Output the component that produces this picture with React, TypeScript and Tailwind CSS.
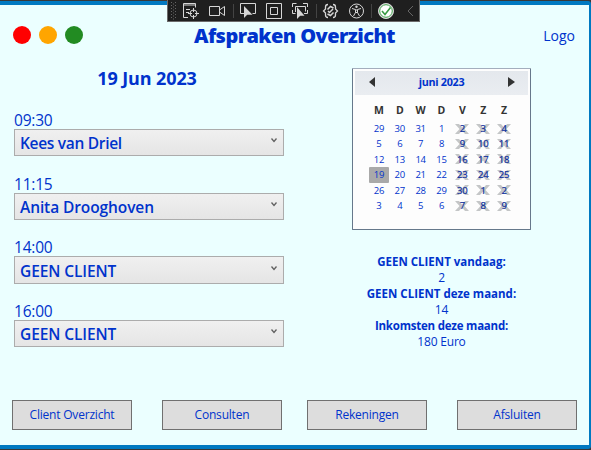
import React from 'react';

const appointments = [
  { time: '09:30', client: 'Kees van Driel', box: 'h-[27px]', gap: 'mb-[21px]', tracking: 'tracking-[-0.3px]' },
  { time: '11:15', client: 'Anita Drooghoven', box: 'h-[27px]', gap: 'mb-5', tracking: 'tracking-[-0.1px]' },
  { time: '14:00', client: 'GEEN CLIENT', box: 'h-7', gap: 'mb-5', tracking: 'tracking-[-0.1px]' },
  { time: '16:00', client: 'GEEN CLIENT', box: 'h-[27px]', gap: '', tracking: 'tracking-[-0.1px]' },
];

const weekdays = ['M', 'D', 'W', 'D', 'V', 'Z', 'Z'];
const days = [
  29, 30, 31, 1, 2, 3, 4,
  5, 6, 7, 8, 9, 10, 11,
  12, 13, 14, 15, 16, 17, 18,
  19, 20, 21, 22, 23, 24, 25,
  26, 27, 28, 29, 30, 1, 2,
  3, 4, 5, 6, 7, 8, 9,
];

const stats = [
  { label: 'GEEN CLIENT vandaag:', value: '2', tracking: 'tracking-[0px]' },
  { label: 'GEEN CLIENT deze maand:', value: '14', tracking: 'tracking-[0px]' },
  { label: 'Inkomsten deze maand:', value: '180 Euro', tracking: 'tracking-[-0.22px]' },
];

function DebugToolbar() {
  return (
    <div className="absolute left-[167px] top-0 h-[22px] w-[253px] border border-t-0 border-[#6b6b6b] bg-[#1f1f1f]">
      <svg width="251" height="21" viewBox="168 0 251 21" fill="none" stroke="#d6d6d6">
        <g stroke="#666" strokeDasharray="1 2">
          <path d="M171.5 2v17M175.5 2v17" />
          <path d="M173.5 3.5v16" />
        </g>
        <path d="M188 17.5h-4.500v-14h12v4M183.500 5h12M186 9.500h4M186 12.500h3" />
        <circle cx="193.500" cy="13.500" r="3.500" />
        <path d="M193.500 8v4M193.500 15v4M188 13.500h4M195 13.500h4" />
        <path d="M209.500 6.500h10v9h-10zM219.500 10l5-3.500v9l-5-3.500" />
        <path d="M233.500 4v14M316.500 4v14M371.500 4v14" stroke="#444" />
        <path d="M244 13.500h-3.500v-10h15v10h-3" />
        <path d="M244 6v12l3.200-3.300h5.300z" fill="#d6d6d6" stroke="none" />
        <path d="M266.500 3.500h15v15h-15zM270.500 7.500h7v7h-7z" />
        <path d="M292.500 7V3.500h4M303 3.500h4.500V7M307.500 10v3.500H304M292.500 10v3.500h3M295.500 12V6.500h10v5" />
        <path d="M297 7v12l3.200-3.300h4.300z" fill="#d6d6d6" stroke="none" />
        <path d="M328 4.500q-2.500 0-2.500 2.500v2l-2 2 2 2v2q0 2.500 2.500 2.500M333 4.500q2.500 0 2.500 2.500v2l2 2-2 2v2q0 2.500-2.500 2.500" strokeWidth="1.300" />
        <path d="M327.500 9.500l3-3 3 1.500M333.500 12.500l-3 3-3-1.500M328 11l1.500 1.500 3.500-3.500" strokeWidth="1.500" />
        <circle cx="356.500" cy="11" r="7" />
        <circle cx="356.500" cy="6.800" r="1.200" fill="#d6d6d6" stroke="none" />
        <path d="M352 8.500l3.500 1v3l-2 3.500M361 8.500l-3.500 1v3l2 3.500M355.500 10h2v2.500h-2z" />
        <circle cx="386" cy="11" r="7.500" fill="#fff" stroke="#d6d6d6" />
        <circle cx="386" cy="11" r="6.300" stroke="#389b43" />
        <path d="M382 11l3 3.500 5.500-7" stroke="#389b43" strokeWidth="1.600" />
        <path d="M413 6l-5 5 5 5" stroke="#666" />
      </svg>
    </div>
  );
}

function Calendar() {
  return (
    <div className="h-[162px] w-[179px] rounded-[1px] border border-[#66788b] border-t-[#a3aebd] bg-[#fdfdfd] p-0.5">
      <div className="flex h-6 items-center justify-between bg-linear-to-b from-[#e4e8ed] to-[#eaedf1] pl-3.5 pr-[13px]">
        <svg width="6" height="10" viewBox="0 0 6 10" className="-mt-0.5"><path d="M6 0v10L0 5z" fill="#333" /></svg>
        <span className="-mt-0.5 text-[10.8px] font-bold tracking-[-0.3px]">juni 2023</span>
        <svg width="7" height="10" viewBox="0 0 7 10" className="-mt-0.5"><path d="M0 0v10l7-5z" fill="#333" /></svg>
      </div>
      <div className="ml-[13.5px] mt-[7px] grid w-[146px] grid-cols-7 text-center text-[10.5px] font-bold leading-4 text-[#333]">
        {weekdays.map((d, i) => <span key={i}>{d}</span>)}
      </div>
      <div className="ml-[13.5px] mt-[3px] grid w-[146px] grid-cols-7 text-center text-[9.5px] leading-[15.4px] tracking-[-0.2px]">
        {days.map((d, i) => (
          <span key={i} className={i === 21 ? 'relative rounded-[1px] bg-[#a9a9a9]' : 'relative'}>
            {i % 7 > 3 && (
              <svg className="absolute left-[3px] top-[2.500px]" width="14" height="10" viewBox="0 0 14 10">
                <path d="M0 0h4l3 3.500L10 0h4L9.500 5l4.500 5h-4L7 6.500 4 10H0l4.500-5z" fill="#c4c6c7" />
              </svg>
            )}
            <span className={i % 7 > 3 ? 'relative text-[#0b2d9c] [-webkit-text-stroke:0.2px_#0b2d9c]' : 'relative'}>{d}</span>
          </span>
        ))}
      </div>
    </div>
  );
}

export default function App() {
  return (
    <div className="h-[450px] w-[591px] overflow-hidden bg-[#383838] py-px font-['Open_Sans','Noto_Sans',sans-serif] text-[#0033cc]">
      <DebugToolbar />
      <div className="flex h-[448px] flex-col rounded-r-[3px] border-y-4 border-r-2 border-y-[#0079c1] border-r-[#0079c1] bg-[#ebffff]">
        <header className="grid h-[63px] grid-cols-[194px_202px_1fr] items-center">
          <div className="-mt-[3px] flex gap-2 pl-[13px]">
            <span className="size-[18px] rounded-full bg-[#ff0000]" />
            <span className="size-[18px] rounded-full bg-[#ffa500]" />
            <span className="size-[18px] rounded-full bg-[#228b22]" />
          </div>
          <h1 className="-mt-0.5 whitespace-nowrap text-[20px] font-extrabold leading-7 tracking-[-0.58px]">Afspraken Overzicht</h1>
          <span className="-mt-0.5 pr-[14px] text-right text-[14px]">Logo</span>
        </header>
        <div className="flex h-[332px]">
          <section className="ml-3.5 w-[270px]">
            <h2 className="mt-[-2px] h-[47px] pr-1 text-center text-[18px] font-bold leading-6 tracking-[-0.1px]">19 Jun 2023</h2>
            {appointments.map((a) => (
              <div key={a.time} className={a.gap}>
                <div className="h-4 text-[15.500px] leading-[15px] tracking-[-0.2px]">{a.time}</div>
                <div className={`${a.box} flex items-center justify-between border border-[#acacac] bg-linear-to-b from-[#f0f0f0] to-[#e5e5e5] pl-[5px] pr-1.5`}>
                  <span className={`${a.tracking} mt-px text-[15.500px] font-semibold leading-5`}>{a.client}</span>
                  <svg width="6" height="5" viewBox="0 0 6 5" className="-mt-1"><path d="M.5.500L3 3.500 5.500.500" fill="none" stroke="#606060" strokeWidth="1.300" /></svg>
                </div>
              </div>
            ))}
          </section>
          <section className="ml-[68px] w-[179px]">
            <Calendar />
            <div className="mt-6 text-center text-[12px] leading-4">
              {stats.map((s) => (
                <div key={s.label}>
                  <div className={`${s.tracking} whitespace-nowrap text-[11.500px] font-bold`}>{s.label}</div>
                  <div className="tracking-[-0.2px]">{s.value}</div>
                </div>
              ))}
            </div>
          </section>
        </div>
        <footer className="grid grid-cols-[120px_120px_120px_120px] pl-3 text-[12px] tracking-[-0.2px] [column-gap:30px]">
          {['Client Overzicht', 'Consulten', 'Rekeningen', 'Afsluiten'].map((b, i) => (
            <button key={b} className={`${i === 2 ? '-ml-[5px] mr-[5px]' : i === 3 ? '-ml-[5px] mr-[5px]' : ''} h-[30px] border border-[#707070] bg-[#dddddd]`}>{b}</button>
          ))}
        </footer>
      </div>
    </div>
  );
}
